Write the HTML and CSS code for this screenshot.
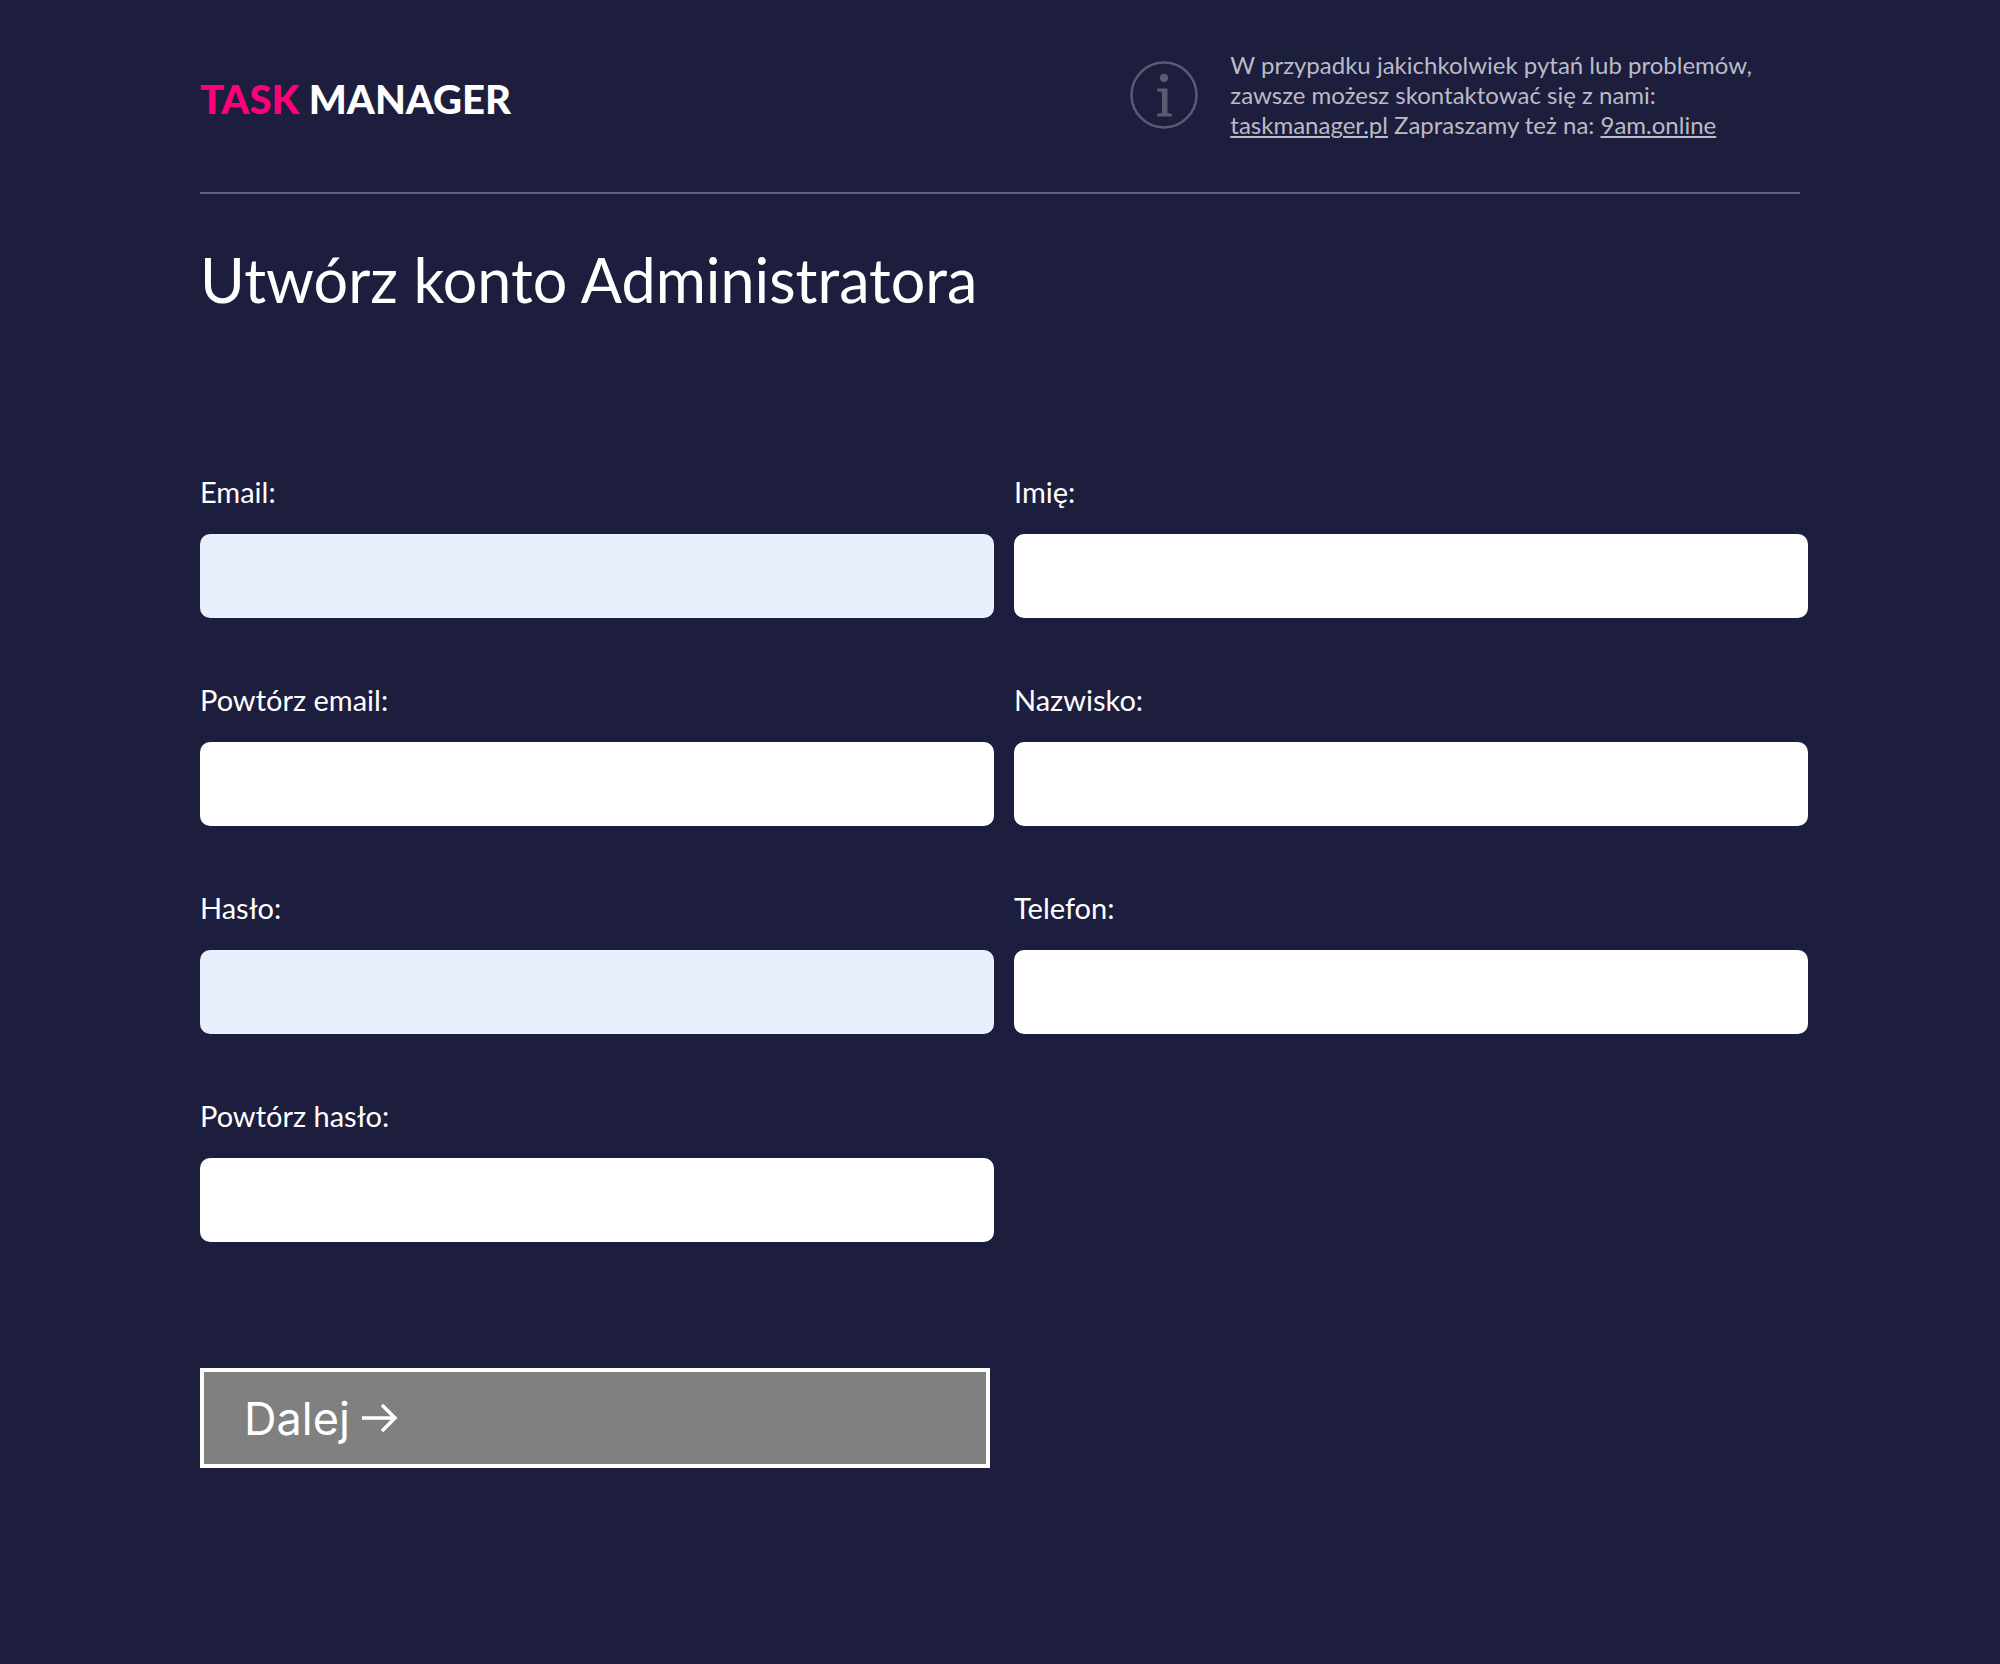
FILE: index.html
```html
<!DOCTYPE html>
<html lang="pl">
<head>
<meta charset="utf-8">
<meta name="viewport" content="width=device-width, initial-scale=1">
<title>Task Manager</title>
<link rel="stylesheet" href="styles.css">
</head>
<body>
<div class="page">
  <header class="header">
    <div class="logo"><span class="logo-accent">TASK</span> MANAGER</div>
    <div class="contact">
      <svg class="contact-icon" viewBox="0 0 68 68" aria-hidden="true">
        <circle cx="34" cy="34" r="32.5" fill="none" stroke="currentColor" stroke-width="2.5"/>
        <circle cx="34" cy="17" r="4.2" fill="currentColor"/>
        <path d="M27 27.500h10.500v24.500l4.500 1v2.500h-15v-2.500l5-1v-21l-5-1z" fill="currentColor"/>
      </svg>
      <p class="contact-text">W przypadku jakichkolwiek pytań lub problemów,<br>zawsze możesz skontaktować się z nami:<br><a href="#">taskmanager.pl</a> Zapraszamy też na: <a href="#">9am.online</a></p>
    </div>
  </header>
  <main>
    <h1 class="title">Utwórz konto Administratora</h1>
    <form class="form">
      <div class="fields">
        <div class="column">
          <div class="field"><label for="email">Email:</label><input class="filled" id="email" type="email"></div>
          <div class="field"><label for="email2">Powtórz email:</label><input id="email2" type="email"></div>
          <div class="field"><label for="pass">Hasło:</label><input class="filled" id="pass" type="password"></div>
          <div class="field"><label for="pass2">Powtórz hasło:</label><input id="pass2" type="password"></div>
        </div>
        <div class="column">
          <div class="field"><label for="first">Imię:</label><input id="first" type="text"></div>
          <div class="field"><label for="last">Nazwisko:</label><input id="last" type="text"></div>
          <div class="field"><label for="phone">Telefon:</label><input id="phone" type="tel"></div>
        </div>
      </div>
      <button class="submit" type="button">Dalej
        <svg class="arrow" viewBox="0 0 36 28" aria-hidden="true"><path d="M0 14H33M20 1L33 14L20 27" fill="none" stroke="currentColor" stroke-width="3.500"/></svg>
      </button>
    </form>
  </main>
</div>
</body>
</html>
```
FILE: styles.css
```css
* {
  box-sizing: border-box;
}

body {
  margin: 0;
  min-height: 100vh;
  background: #1d1d3e;
  color: #fff;
  font-family: Lato, "Liberation Sans", sans-serif;
}

.page {
  padding: 0 10% 64px;
}

.header {
  display: flex;
  justify-content: space-between;
  align-items: center;
  padding: 50px 48px 52px 0;
  border-bottom: 2px solid #626079;
}

.logo {
  font-family: "Lato Black", Lato, "Liberation Sans", sans-serif;
  font-size: 40px;
  font-weight: 900;
  line-height: 48px;
  padding-top: 8px;
}

.logo-accent {
  color: #ff007a;
}

.contact {
  display: flex;
  align-items: center;
  gap: 32px;
}

.contact-icon {
  width: 68px;
  height: 68px;
  color: #5b5a74;
}

.contact-text {
  margin: 0;
  font-size: 24px;
  line-height: 30px;
  color: #bbbbc5;
}

.contact-text a {
  color: inherit;
  text-decoration-thickness: 2px;
  text-underline-offset: 2px;
}

.title {
  margin: 46px 0 152px;
  font-size: 61px;
  font-weight: 400;
  line-height: 80px;
}

.fields {
  display: grid;
  grid-template-columns: 1fr 1fr;
  gap: 20px;
  margin-right: -8px;
}

.column {
  display: flex;
  flex-direction: column;
  gap: 62px;
}

.field {
  display: flex;
  flex-direction: column;
  gap: 22px;
}

.field label {
  font-size: 29px;
  line-height: 40px;
}

.field input {
  width: 100%;
  height: 84px;
  padding: 0 24px;
  border: 0;
  border-radius: 10px;
  background: #fff;
  font: inherit;
  font-size: 29px;
}

.field .filled {
  background: #e8effd;
}

.submit {
  display: flex;
  align-items: center;
  gap: 12px;
  width: calc(50% - 10px);
  height: 100px;
  margin-top: 126px;
  padding: 0 40px;
  border: 4px solid #fff;
  background: #808080;
  color: #fff;
  font-family: Inter, "Liberation Sans", sans-serif;
  font-size: 45px;
  font-weight: 400;
  text-align: left;
}

.arrow {
  width: 36px;
  height: 28px;
}
```
